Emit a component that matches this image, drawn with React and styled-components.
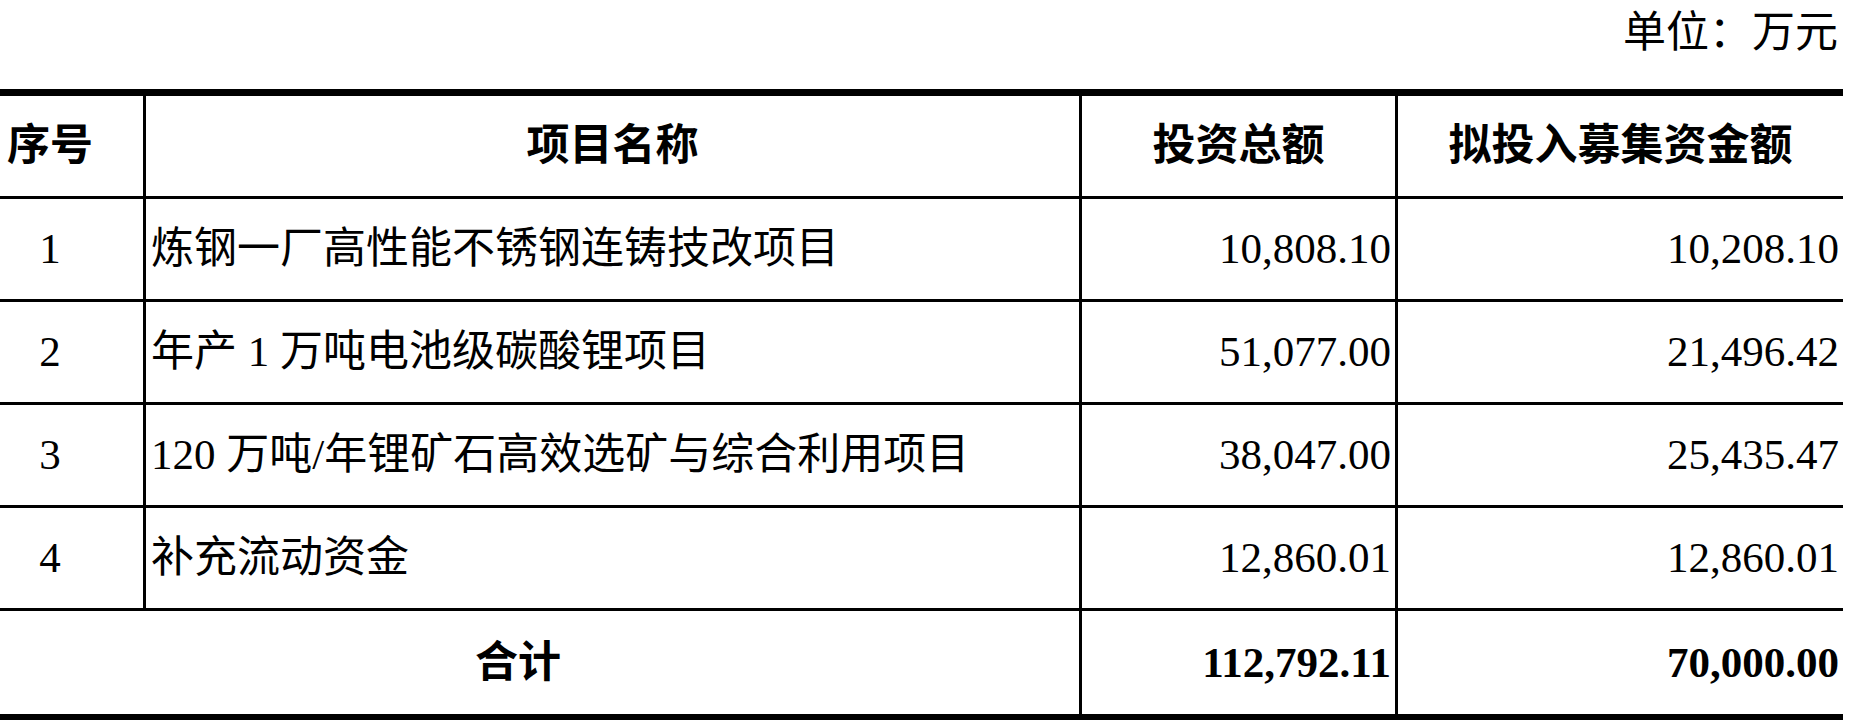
import React from "react";
import styled, { createGlobalStyle } from "styled-components";

const Global = createGlobalStyle`
  html, body {
    margin: 0;
    padding: 0;
    background: #ffffff;
    overflow: hidden;
  }
  body {
    font-family: "Liberation Serif", "Noto Sans CJK SC", serif;
    color: #000;
  }
`;

const Page = styled.div`
  width: 1854px;
  height: 720px;
  overflow: hidden;
`;

const Unit = styled.div`
  height: 89px;
  box-sizing: border-box;
  padding: 11px 16px 0 0;
  text-align: right;
  font-size: 43px;
  line-height: 43px;
`;

const Grid = styled.div`
  margin-left: -43px;
  width: 1886px;
  display: grid;
  grid-template-columns: 189px 936px 316px 445px;
  grid-auto-rows: 103px;
  border-top: 7px solid #000;
  border-bottom: 7px solid #000;
`;

const Cell = styled.div`
  box-sizing: border-box;
  display: flex;
  align-items: center;
  justify-content: ${(p) =>
    p.$align === "left" ? "flex-start" : p.$align === "right" ? "flex-end" : "center"};
  padding: ${(p) => (p.$align === "left" ? "0 0 0 5px" : p.$align === "right" ? "0 4px 0 0" : "0")};
  border-right: ${(p) => (p.$last ? "none" : "3px solid #000")};
  border-bottom: ${(p) => (p.$bottom ? "none" : "3px solid #000")};
  grid-column: ${(p) => (p.$span ? `span ${p.$span}` : "auto")};
  font-size: 43px;
  line-height: 1.2;
  font-weight: ${(p) => (p.$bold ? 700 : 400)};
  white-space: nowrap;
`;

const rows = [
  ["1", "炼钢一厂高性能不锈钢连铸技改项目", "10,808.10", "10,208.10"],
  ["2", "年产 1 万吨电池级碳酸锂项目", "51,077.00", "21,496.42"],
  ["3", "120 万吨/年锂矿石高效选矿与综合利用项目", "38,047.00", "25,435.47"],
  ["4", "补充流动资金", "12,860.01", "12,860.01"],
];

export default function App() {
  return (
    <Page>
      <Global />
      <Unit>单位：万元</Unit>
      <Grid>
        <Cell $bold>序号</Cell>
        <Cell $bold>项目名称</Cell>
        <Cell $bold>投资总额</Cell>
        <Cell $bold $last>拟投入募集资金额</Cell>
        {rows.map((r) => (
          <React.Fragment key={r[0]}>
            <Cell>{r[0]}</Cell>
            <Cell $align="left">{r[1]}</Cell>
            <Cell $align="right">{r[2]}</Cell>
            <Cell $align="right" $last>{r[3]}</Cell>
          </React.Fragment>
        ))}
        <Cell $span={2} $bold $bottom>合计</Cell>
        <Cell $align="right" $bold $bottom>112,792.11</Cell>
        <Cell $align="right" $bold $bottom $last>70,000.00</Cell>
      </Grid>
    </Page>
  );
}
